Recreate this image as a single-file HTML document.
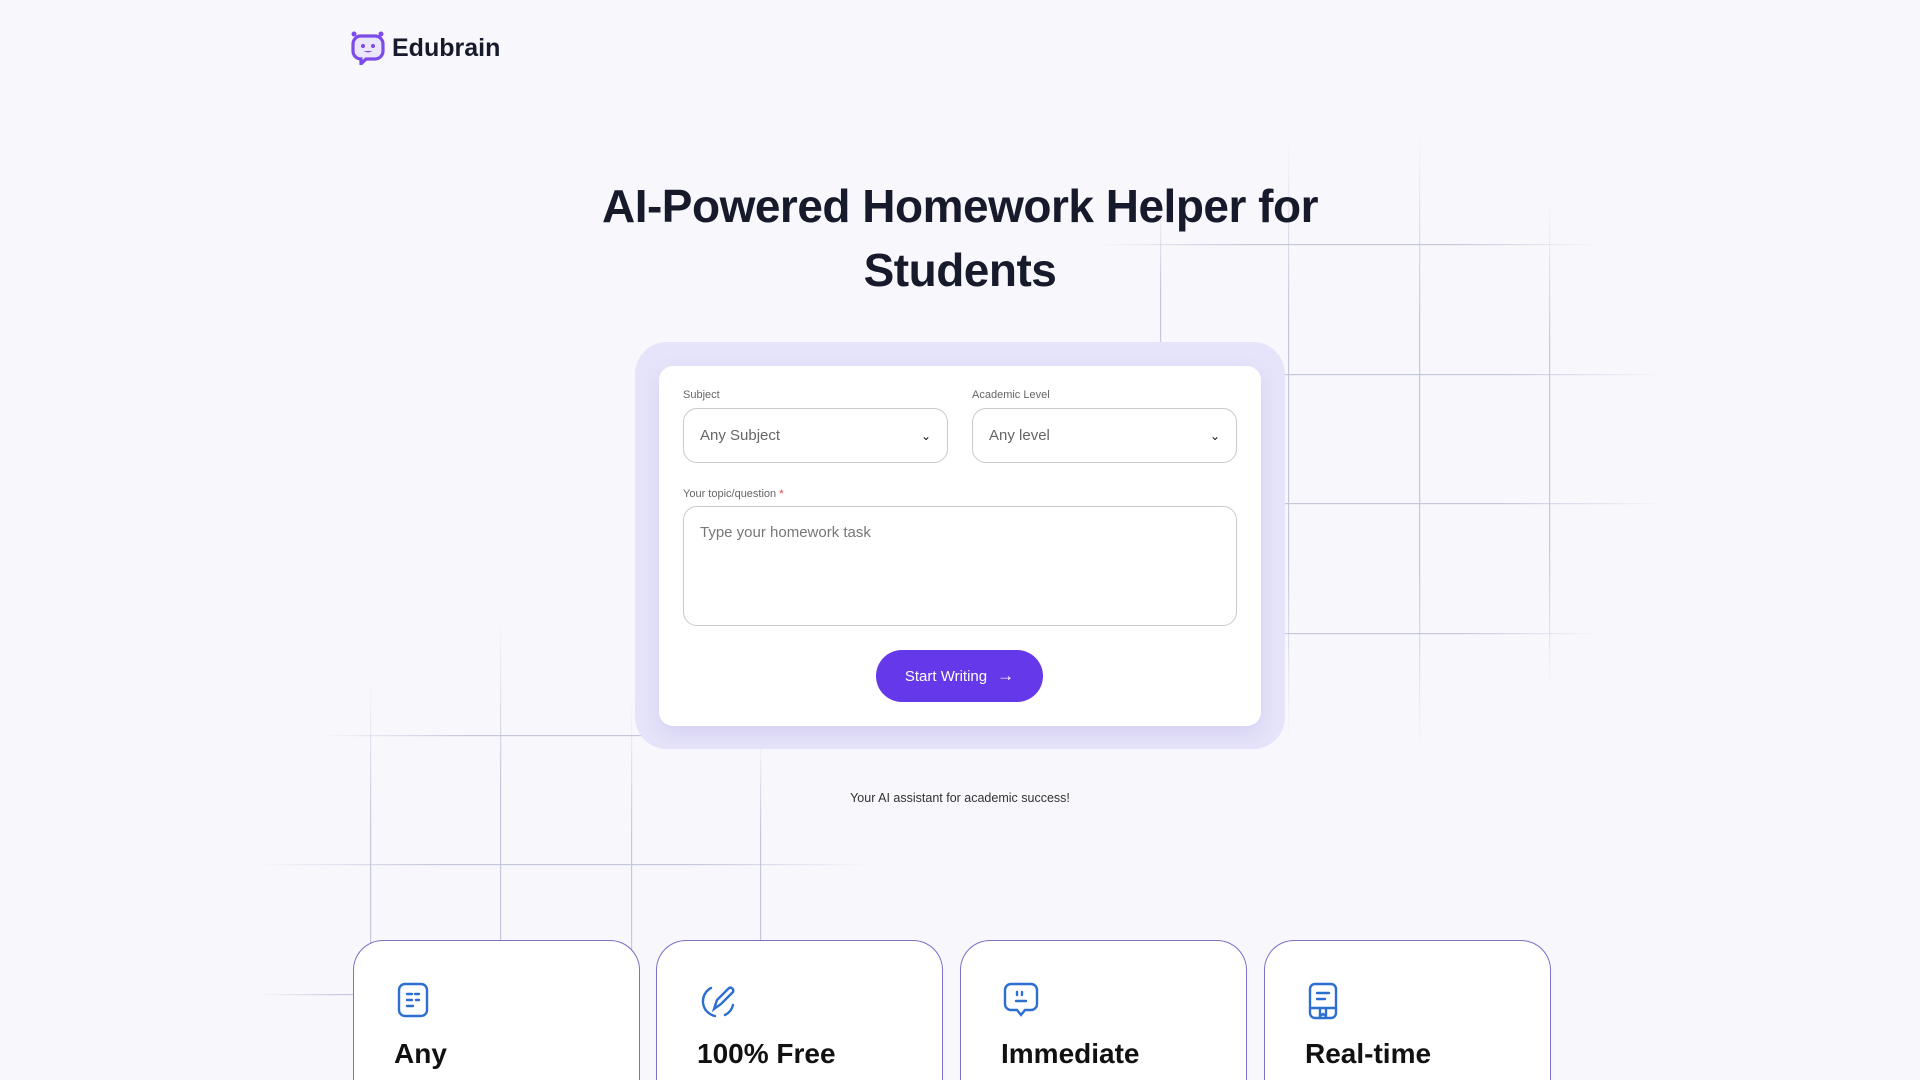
<!DOCTYPE html>
<html><head><meta charset="utf-8"><style>
*{box-sizing:border-box;margin:0;padding:0}
html{width:1920px;height:1080px;overflow:hidden}
body{width:1920px;height:1080px;overflow:hidden;background:#f7f7fc;font-family:"Liberation Sans",sans-serif;color:#141826;position:relative}
.abs{position:absolute}
h1{position:absolute;left:0;width:1920px;top:174px;text-align:center;font-size:46px;font-weight:600;line-height:64px;color:#161a2b;letter-spacing:-0.5px}
.outer{left:635px;top:342px;width:650px;height:407px;background:#e6e4fa;border-radius:32px}
.inner{left:659px;top:366px;width:602px;height:360px;background:#fff;border-radius:14px;box-shadow:0 8px 20px rgba(120,110,200,.15)}
.lbl{font-size:11px;color:#666}
.sel{height:55px;width:265px;border:1px solid #c9c9d0;border-radius:14px;background:#fff;font-size:15px;color:#666;padding:0 16px;display:flex;align-items:center;justify-content:space-between}
.ta{left:683px;top:506px;width:554px;height:120px;border:1px solid #c9c9d0;border-radius:14px;font-size:15px;color:#777;padding:17px 16px}
.btn{left:876px;top:650px;width:167px;height:52px;background:#6538ea;border-radius:26px;color:#fff;font-size:15px;display:flex;align-items:center;justify-content:center;gap:10px}
.card{top:940px;width:287px;height:140px;background:#fff;border:1.5px solid #8070c8;border-bottom:none;border-radius:30px 30px 0 0}
.card .t{position:absolute;left:40px;top:97px;font-size:28px;font-weight:600;color:#111}
.card svg{position:absolute;left:42px;top:41px}
</style></head><body>
<svg class="abs" style="left:0;top:0" width="1920" height="1080">
<defs>
<linearGradient id="v" x1="0" y1="0" x2="0" y2="1"><stop offset="0" stop-color="#c5c8dc" stop-opacity="0"/><stop offset=".3" stop-color="#c5c8dc"/><stop offset=".7" stop-color="#c5c8dc"/><stop offset="1" stop-color="#c5c8dc" stop-opacity="0"/></linearGradient>
<linearGradient id="h" x1="0" y1="0" x2="1" y2="0"><stop offset="0" stop-color="#c5c8dc" stop-opacity="0"/><stop offset=".3" stop-color="#c5c8dc"/><stop offset=".7" stop-color="#c5c8dc"/><stop offset="1" stop-color="#c5c8dc" stop-opacity="0"/></linearGradient>
</defs>
<g>
<rect x="1160" y="200" width="1.2" height="300" fill="url(#v)"/>
<rect x="1288" y="140" width="1.2" height="600" fill="url(#v)"/>
<rect x="1419" y="135" width="1.2" height="615" fill="url(#v)"/>
<rect x="1549" y="200" width="1.2" height="490" fill="url(#v)"/>
<rect x="1100" y="244" width="500" height="1.2" fill="url(#h)"/>
<rect x="1100" y="374" width="565" height="1.2" fill="url(#h)"/>
<rect x="1100" y="503" width="565" height="1.2" fill="url(#h)"/>
<rect x="1100" y="633" width="500" height="1.2" fill="url(#h)"/>
<rect x="370" y="680" width="1.2" height="500" fill="url(#v)"/>
<rect x="500" y="620" width="1.2" height="560" fill="url(#v)"/>
<rect x="631" y="700" width="1.2" height="460" fill="url(#v)"/>
<rect x="760" y="740" width="1.2" height="300" fill="url(#v)"/>
<rect x="320" y="735" width="500" height="1.2" fill="url(#h)"/>
<rect x="257" y="864" width="613" height="1.2" fill="url(#h)"/>
<rect x="257" y="994" width="300" height="1.2" fill="url(#h)"/>
</g></svg>

<svg class="abs" style="left:350px;top:31px" width="36" height="34" viewBox="0 0 36 34">
<circle cx="4" cy="3" r="2.5" fill="#7c4be8"/><circle cx="31" cy="3" r="2.5" fill="#7c4be8"/>
<path d="M10 5h15a8 8 0 0 1 8 8v7a8 8 0 0 1-8 8H16l-5 5v-5a8 8 0 0 1-8-8v-7a8 8 0 0 1 7-8z" fill="#ece6fd" stroke="#7c4be8" stroke-width="3.2"/>
<circle cx="13" cy="15" r="2" fill="#7c4be8"/><circle cx="23" cy="15" r="2" fill="#7c4be8"/>
<path d="M14 20q4 3 8 0" fill="#7c4be8"/>
</svg>
<div class="abs" style="left:392px;top:34px;font-size:25px;font-weight:600;color:#161a2b">Edubrain</div>

<h1>AI-Powered Homework Helper for<br>Students</h1>

<div class="abs outer"></div>
<div class="abs inner"></div>
<div class="abs lbl" style="left:683px;top:389px">Subject</div>
<div class="abs lbl" style="left:972px;top:389px">Academic Level</div>
<div class="abs sel" style="left:683px;top:408px"><span>Any Subject</span><span style="color:#111;font-size:12px">&#8964;</span></div>
<div class="abs sel" style="left:972px;top:408px"><span>Any level</span><span style="color:#111;font-size:12px">&#8964;</span></div>
<div class="abs lbl" style="left:683px;top:488px">Your topic/question <span style="color:#e33">*</span></div>
<div class="abs ta">Type your homework task</div>
<div class="abs btn">Start Writing <span style="font-size:17px">&#8594;</span></div>
<div class="abs" style="left:0;width:1920px;top:791px;text-align:center;font-size:12.5px;color:#333">Your AI assistant for academic success!</div>

<div class="abs card" style="left:353px">
<svg width="34" height="36" viewBox="0 0 34 36" fill="none" stroke="#2d6fd0" stroke-width="2.4" stroke-linecap="round"><rect x="3" y="2" width="28" height="32" rx="6"/><path d="M11 12h5M19 12h4M11 18h5M20 18h3M11 24h6"/></svg>
<div class="t">Any</div></div>
<div class="abs card" style="left:656px">
<svg width="38" height="38" viewBox="0 0 38 38" fill="none" stroke="#2d6fd0" stroke-width="2.4" stroke-linecap="round"><path d="M12 6A15 15 0 0 0 16 34M26 33a15 15 0 0 0 8-10"/><path d="M15 27l3-9 12-12a3 3 0 0 1 4 4L22 22z"/></svg>
<div class="t">100% Free</div></div>
<div class="abs card" style="left:960px">
<svg width="36" height="38" viewBox="0 0 36 38" fill="none" stroke="#2d6fd0" stroke-width="2.4" stroke-linecap="round"><path d="M8 2h20a6 6 0 0 1 6 6v14a6 6 0 0 1-6 6h-6l-4 5-4-5H8a6 6 0 0 1-6-6V8a6 6 0 0 1 6-6z"/><path d="M14 10v3M19 10v3M13 19h10"/></svg>
<div class="t">Immediate</div></div>
<div class="abs card" style="left:1264px">
<svg width="32" height="38" viewBox="0 0 32 38" fill="none" stroke="#2d6fd0" stroke-width="2.4" stroke-linecap="round"><rect x="3" y="2" width="26" height="34" rx="5"/><path d="M10 11h12M10 17h8M3 26h26M13 26v8l3-2 3 2v-8"/></svg>
<div class="t">Real-time</div></div>
</body></html>
